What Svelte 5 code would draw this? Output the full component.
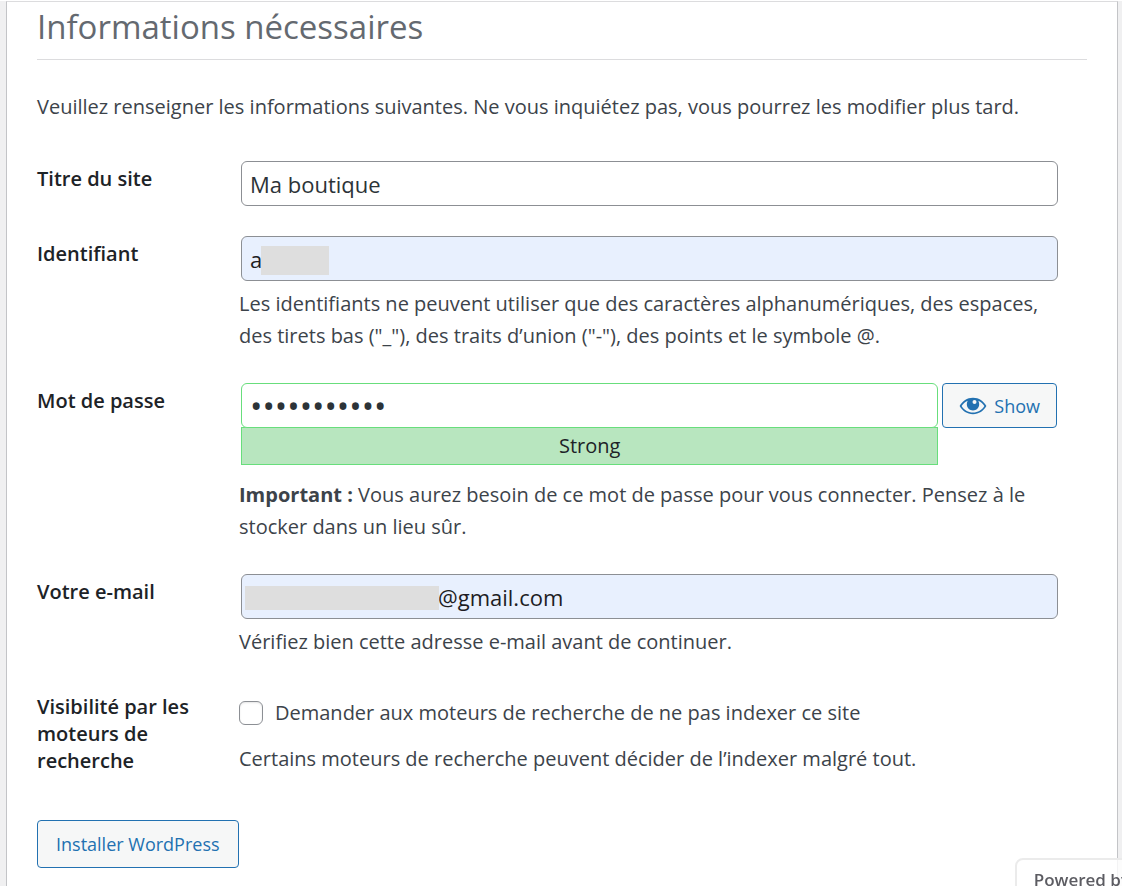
<script>
  let title = $state('Ma boutique');
  let user = $state('a');
  let password = $state('boutique-12');
  let email = $state('@gmail.com');
  let noIndex = $state(false);
  let visible = $state(false);
</script>

<div class="page">
  <main class="card">
    <h1>Informations nécessaires</h1>
    <p class="intro">
      Veuillez renseigner les informations suivantes. Ne vous inquiétez pas, vous pourrez les modifier plus tard.
    </p>

    <form onsubmit={(e) => e.preventDefault()}>
      <div class="row">
        <label class="name" for="weblog_title">Titre du site</label>
        <div class="field">
          <input class="text" id="weblog_title" type="text" bind:value={title} />
        </div>
      </div>

      <div class="row">
        <label class="name" for="user_login">Identifiant</label>
        <div class="field">
          <div class="masked">
            <input class="text filled" id="user_login" type="text" bind:value={user} />
            <span class="mask mask-user"></span>
          </div>
          <p class="desc">
            Les identifiants ne peuvent utiliser que des caractères alphanumériques, des espaces,
            des tirets bas ("_"), des traits d’union ("-"), des points et le symbole @.
          </p>
        </div>
      </div>

      <div class="row">
        <label class="name" for="pass1">Mot de passe</label>
        <div class="field">
          <div class="password">
            <div class="password-input">
              <input
                class="text strong"
                class:dots={!visible}
                id="pass1"
                type={visible ? 'text' : 'password'}
                bind:value={password}
              />
              <div class="strength">Strong</div>
            </div>
            <button class="button toggle" type="button" onclick={() => (visible = !visible)}>
              <svg viewBox="0 0 28 18" width="28" height="18" aria-hidden="true">
                <path
                  fill="currentColor"
                  fill-rule="evenodd"
                  d="M14 0.8C20 0.8 24.6 4.2 27.4 9C24.6 13.8 20 17.2 14 17.2C8 17.2 3.4 13.8 0.6 9C3.4 4.2 8 0.8 14 0.8ZM8.7 3.8C6 5 4 6.8 2.6 9C5 12.9 9 15.5 14 15.5C19 15.5 23 12.9 25.4 9C24 6.8 22 5 19.3 3.8C19.9 4.8 20.2 6 20.2 7.3C20.2 10.8 17.4 13.5 14 13.5C10.6 13.5 7.8 10.8 7.8 7.3C7.8 6 8.1 4.8 8.7 3.8Z"
                />
                <circle cx="15.5" cy="5" r="2" fill="#f6f7f7" />
              </svg>
              Show
            </button>
          </div>
          <p class="desc spaced">
            <strong>Important :</strong> Vous aurez besoin de ce mot de passe pour vous connecter. Pensez à le
            stocker dans un lieu sûr.
          </p>
        </div>
      </div>

      <div class="row">
        <label class="name" for="admin_email">Votre e-mail</label>
        <div class="field">
          <div class="masked">
            <input class="text filled email" id="admin_email" type="text" bind:value={email} />
            <span class="mask mask-email"></span>
          </div>
          <p class="desc">Vérifiez bien cette adresse e-mail avant de continuer.</p>
        </div>
      </div>

      <div class="row">
        <label class="name" for="blog_public">Visibilité par les moteurs de recherche</label>
        <div class="field check-field">
          <label class="check">
            <input id="blog_public" type="checkbox" bind:checked={noIndex} />
            Demander aux moteurs de recherche de ne pas indexer ce site
          </label>
          <p class="desc spaced">Certains moteurs de recherche peuvent décider de l’indexer malgré tout.</p>
        </div>
      </div>

      <button class="button submit" type="submit">Installer WordPress</button>
    </form>
  </main>

  <div class="powered">Powered by</div>
</div>

<style>
  :global(body) {
    background: #f0f0f1;
  }
  .page {
    box-sizing: border-box;
    min-height: 100vh;
    padding: 0 4px 0 6px;
    border-top: 1px solid #fff;
    font-family: 'Open Sans', 'Noto Sans', sans-serif;
    font-size: 20px;
    color: #3c434a;
  }
  .card {
    box-sizing: border-box;
    min-height: calc(100vh - 1px);
    padding: 0 30px 16px;
    background: #fff;
    border: 1px solid #c3c4c7;
    border-top-color: #dcdcde;
    border-bottom: none;
  }
  h1 {
    margin: 0;
    padding-bottom: 7px;
    border-bottom: 1px solid #dcdcde;
    font-size: 33px;
    line-height: 50px;
    font-weight: 400;
    color: #646970;
  }
  .intro {
    margin: 31px 0 38px;
    line-height: 32px;
  }
  form {
    display: flex;
    flex-direction: column;
    gap: 30px;
  }
  .row {
    display: grid;
    grid-template-columns: 202px 1fr;
    padding-right: 29px;
  }
  .name {
    padding: 4px 40px 0 0;
    font-weight: 600;
    line-height: 27px;
    color: #1d2327;
  }
  .text {
    display: block;
    box-sizing: border-box;
    width: 100%;
    height: 45px;
    margin: 0;
    padding: 0 8px;
    border: 1px solid #8c8f94;
    border-radius: 6px;
    background: #fff;
    font: inherit;
    font-size: 22px;
    color: #2c3338;
  }
  .masked,
  .password {
    margin-left: 2px;
  }
  .field > .text {
    width: calc(100% - 2px);
    margin-left: 2px;
  }
  .filled {
    background: #e8f0fe;
    color: #1d1d24;
  }
  .masked {
    position: relative;
  }
  .mask {
    position: absolute;
    background: #dedede;
  }
  .mask-user {
    left: 20px;
    top: 10px;
    width: 68px;
    height: 29px;
  }
  .mask-email {
    left: 4px;
    top: 12px;
    width: 194px;
    height: 24px;
  }
  .email {
    padding-left: 196px;
  }
  .desc {
    margin: 7px 0 1px;
    line-height: 32px;
  }
  .spaced {
    margin-top: 14px;
  }
  .password {
    display: flex;
    align-items: flex-start;
    gap: 4px;
    margin-right: 1px;
  }
  .password-input {
    flex: 1;
  }
  .strong {
    position: relative;
    border-color: #68de7c;
  }
  .dots {
    font-size: 33px;
    line-height: 43px;
  }
  .strength {
    margin-top: -1px;
    border: 1px solid #68de7c;
    background: #b8e6bf;
    line-height: 36px;
    text-align: center;
    color: #1d2327;
  }
  .button {
    box-sizing: border-box;
    border: 1px solid #2271b1;
    border-radius: 4px;
    background: #f6f7f7;
    font: inherit;
    font-size: 18px;
    color: #2271b1;
    cursor: pointer;
  }
  .toggle {
    display: flex;
    align-items: center;
    gap: 7px;
    height: 45px;
    padding: 0 16px;
  }
  .check-field {
    padding-top: 8px;
  }
  .check {
    display: flex;
    align-items: center;
    gap: 12px;
    line-height: 32px;
  }
  .check input {
    appearance: none;
    box-sizing: border-box;
    width: 24px;
    height: 24px;
    margin: 0;
    border: 1px solid #8c8f94;
    border-radius: 6px;
    background: #fff;
    box-shadow: inset 0 1px 2px rgba(0, 0, 0, 0.1);
  }
  .check input:checked {
    background: #2271b1;
  }
  .submit {
    align-self: flex-start;
    height: 48px;
    margin-top: 14px;
    padding: 0 18px;
  }
  .powered {
    position: fixed;
    right: -34px;
    bottom: -16px;
    padding: 8px 24px 8px 17px;
    border: 2px solid #ebebeb;
    border-radius: 8px;
    background: rgba(255, 255, 255, 0.8);
    font-size: 17px;
    font-weight: 600;
    line-height: 24px;
    color: #5c5c62;
  }
</style>
